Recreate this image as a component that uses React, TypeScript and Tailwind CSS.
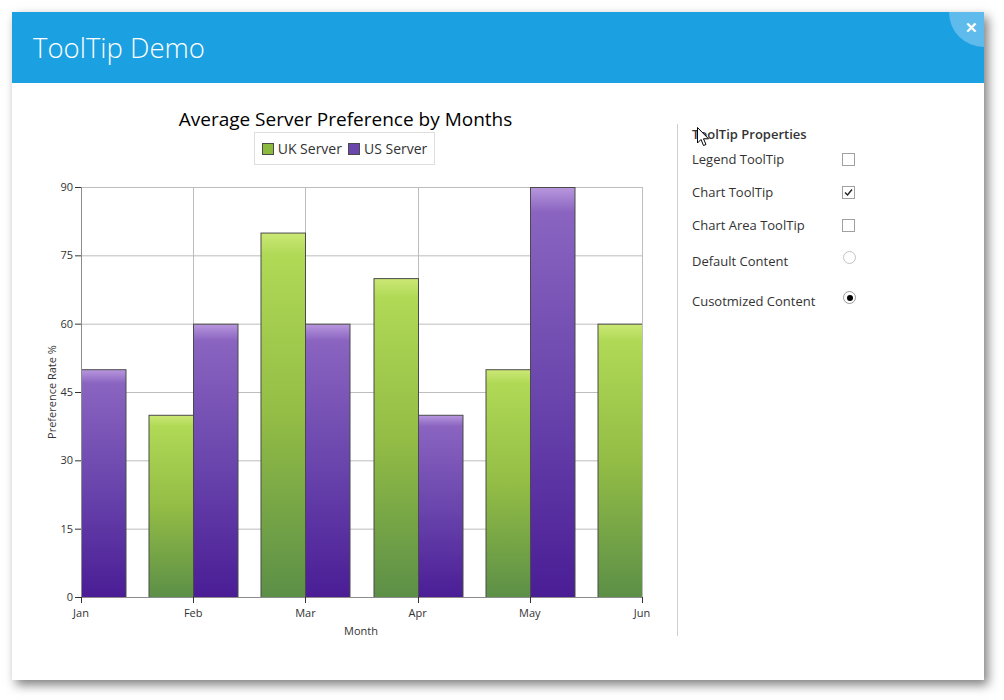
import React from 'react';

const FONT = "font-['Segoe_UI','Open_Sans',sans-serif]";

const months = ['Jan', 'Feb', 'Mar', 'Apr', 'May', 'Jun'];
const ukServer = [0, 40, 80, 70, 50, 60];
const usServer = [50, 60, 60, 40, 90, 0];
const ticks = [0, 15, 30, 45, 60, 75, 90];

const LEFT = 81;
const RIGHT = 642;
const TOP = 187;
const BOTTOM = 597;
const STEP = (RIGHT - LEFT) / 5;
const BAR = 44.5;

const xAt = (i: number) => LEFT + i * STEP;
const yAt = (v: number) => BOTTOM - (v * (BOTTOM - TOP)) / 90;

const Chart: React.FC = () => (
  <svg width={665} height={480} viewBox="12 165 665 480" className="block">
    <defs>
      <linearGradient id="green" x1="0" y1="0" x2="0" y2="1">
        <stop offset="0" stopColor="#cbe875" />
        <stop offset="0.06" stopColor="#b0d956" />
        <stop offset="0.5" stopColor="#93bd45" />
        <stop offset="1" stopColor="#5c8f47" />
      </linearGradient>
      <linearGradient id="purple" x1="0" y1="0" x2="0" y2="1">
        <stop offset="0" stopColor="#b897de" />
        <stop offset="0.06" stopColor="#8a64c0" />
        <stop offset="0.5" stopColor="#6a46ad" />
        <stop offset="1" stopColor="#4a1d95" />
      </linearGradient>
      <clipPath id="plot">
        <rect x={LEFT} y={TOP - 1} width={RIGHT - LEFT} height={BOTTOM - TOP + 1} />
      </clipPath>
    </defs>

    {ticks.map((t) => (
      <line key={`h${t}`} x1={LEFT} x2={RIGHT} y1={yAt(t) + 0.5} y2={yAt(t) + 0.5} stroke="#bdbdbd" />
    ))}
    {months.map((m, i) => (
      <line key={`v${m}`} x1={Math.round(xAt(i)) + 0.5} x2={Math.round(xAt(i)) + 0.5} y1={TOP} y2={BOTTOM} stroke="#bdbdbd" />
    ))}

    <g clipPath="url(#plot)">
      {months.map((m, i) => {
        const x = Math.round(xAt(i));
        return (
          <g key={m}>
            {ukServer[i] > 0 && (
              <rect x={x - BAR + 0.5} y={yAt(ukServer[i]) + 0.5} width={BAR} height={BOTTOM - yAt(ukServer[i])} fill="url(#green)" stroke="#4a4a4a" />
            )}
            {usServer[i] > 0 && (
              <rect x={x + 0.5} y={yAt(usServer[i]) + 0.5} width={BAR} height={BOTTOM - yAt(usServer[i])} fill="url(#purple)" stroke="#4a4a4a" />
            )}
          </g>
        );
      })}
    </g>

    <line x1={LEFT + 0.5} x2={LEFT + 0.5} y1={TOP} y2={BOTTOM + 1} stroke="#8c8c8c" />
    <line x1={LEFT} x2={RIGHT + 1} y1={BOTTOM + 0.5} y2={BOTTOM + 0.5} stroke="#8c8c8c" />

    {ticks.map((t) => (
      <g key={`t${t}`}>
        <line x1={LEFT - 6} x2={LEFT} y1={yAt(t) + 0.5} y2={yAt(t) + 0.5} stroke="#333" />
        <text x={LEFT - 8} y={yAt(t) + 4} textAnchor="end" fontSize="11" fill="#333">
          {t}
        </text>
      </g>
    ))}
    {months.map((m, i) => (
      <g key={`x${m}`}>
        <line x1={Math.round(xAt(i)) + 0.5} x2={Math.round(xAt(i)) + 0.5} y1={BOTTOM} y2={BOTTOM + 6} stroke="#333" />
        <text x={xAt(i)} y={617} textAnchor="middle" fontSize="11" fill="#333">
          {m}
        </text>
      </g>
    ))}
    <text x={361} y={635} textAnchor="middle" fontSize="11" fill="#333">
      Month
    </text>
    <text x={0} y={0} transform="translate(56 392) rotate(-90)" textAnchor="middle" fontSize="11" fill="#333">
      Preference Rate %
    </text>
  </svg>
);

const CheckBox: React.FC<{ checked?: boolean }> = ({ checked }) => (
  <div className="w-[13px] h-[13px] border border-[#a0a0a0] bg-white flex items-center justify-center">
    {checked && (
      <svg width="9" height="9" viewBox="0 0 9 9">
        <path d="M1 4.5 L3.5 7 L8 1.5" fill="none" stroke="#222" strokeWidth="1.4" />
      </svg>
    )}
  </div>
);

const Radio: React.FC<{ checked?: boolean }> = ({ checked }) => (
  <div className={`w-[13px] h-[13px] rounded-full border bg-white flex items-center justify-center ${checked ? 'border-[#9a9a9a]' : 'border-[#c4c4c4]'}`}>
    {checked && <div className="w-[6px] h-[6px] rounded-full bg-black" />}
  </div>
);

const Row: React.FC<{ label: string; children: React.ReactNode; className?: string }> = ({ label, children, className }) => (
  <div className={`flex h-[33px] ${className ?? ''}`}>
    <div className="w-[150px] flex items-center text-[13px] text-[#333]">{label}</div>
    {children}
  </div>
);

const App: React.FC = () => {
  return (
    <div className={`w-[1004px] h-[700px] bg-white ${FONT}`}>
      <div className="pt-3 pl-3">
        <div className="relative w-[972px] h-[668px] bg-white shadow-[4px_5px_10px_rgba(0,0,0,0.5)] overflow-hidden">
          <div className="h-[71px] bg-[#1ba1e2] flex items-center pl-[21px]">
            <h1 className="text-[27.5px] font-light text-white leading-none mt-[1px]">ToolTip Demo</h1>
          </div>
          <div className="absolute -top-[35px] -right-[35px] w-[70px] h-[70px] rounded-full bg-[#5fbbeb]" />
          <div className="absolute top-[8px] right-[6px] text-white text-[15px] font-bold leading-none">✕</div>

          <div className="flex">
            <div className="w-[665px] flex flex-col items-center pt-[23px]">
              <div className="text-[19px] text-black leading-[27px] pl-[2px]">Average Server Preference by Months</div>
              <div className="mt-[-1px] h-[33px] border border-[#dedede] flex items-center px-[7px] gap-[6px] text-[14px] text-[#333]">
                <div className="flex items-center gap-[4px]">
                  <div className="w-[12px] h-[12px] bg-[#8cba3c] border border-[#4a4a4a]" />
                  <span>UK Server</span>
                </div>
                <div className="flex items-center gap-[4px]">
                  <div className="w-[12px] h-[12px] bg-[#6a46ad] border border-[#4a4a4a]" />
                  <span>US Server</span>
                </div>
              </div>
              <Chart />
            </div>

            <div className="relative mt-[41px] h-[512px] border-l border-[#cfcfcf] pl-[14px]">
              <div className="pt-[1px] h-[19px] text-[13px] font-semibold text-[#333] leading-[18px]">ToolTip Properties</div>
              <Row label="Legend ToolTip">
                <div className="pt-[10px]"><CheckBox /></div>
              </Row>
              <Row label="Chart ToolTip">
                <div className="pt-[10px]"><CheckBox checked /></div>
              </Row>
              <Row label="Chart Area ToolTip">
                <div className="pt-[10px]"><CheckBox /></div>
              </Row>
              <Row label="Default Content" className="mt-[3px]">
                <div className="pt-[6px] pl-[1px]"><Radio /></div>
              </Row>
              <Row label="Cusotmized Content" className="mt-[7px]">
                <div className="pt-[6px] pl-[1px]"><Radio checked /></div>
              </Row>
              <svg className="absolute left-[19px] top-[3px]" width="13" height="20" viewBox="0 0 13 20">
                <path d="M0.5 0.5 L0.5 16 L4 12.5 L6.5 18.5 L9 17.5 L6.5 11.8 L11.5 11.8 Z" fill="#fff" stroke="#000" strokeWidth="1" strokeLinejoin="miter" />
              </svg>
            </div>
          </div>
        </div>
      </div>
    </div>
  );
};

export default App;
